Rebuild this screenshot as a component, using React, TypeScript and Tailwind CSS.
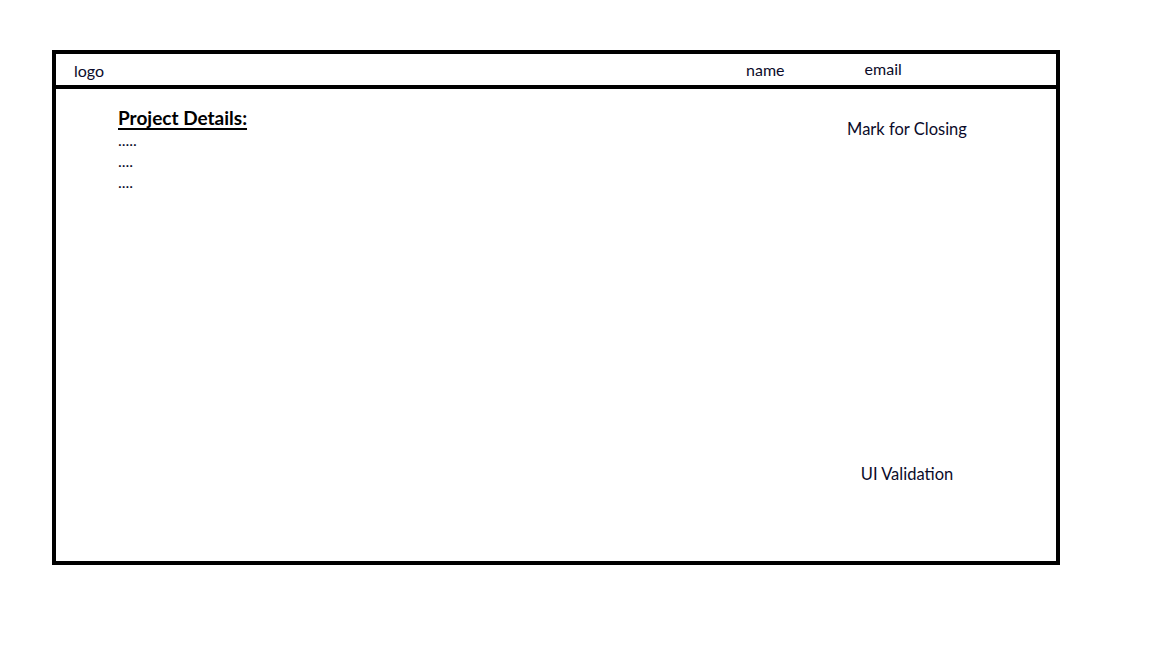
const App = () => {
    return (
        <div className="w-[1152px] h-[648px] bg-white pt-[50px] pl-[52px] text-[#0b0b2a]" style={{ fontFamily: 'Lato, "Open Sans", sans-serif' }}>
            <div className="w-[1008px] h-[515px] border-4 border-black flex flex-col">
                {/* Header */}
                <div className="h-[35px] border-b-4 border-black flex items-center text-[16px]">
                    <span className="ml-[18px] mt-[3px]">logo</span>
                    <span className="ml-[642px] mt-[1px]">name</span>
                    <span className="ml-[80px] -mt-[2px]">email</span>
                </div>

                {/* Body */}
                <div className="flex-1 flex">
                    <div className="flex-1 pl-[62px] pt-[17px]">
                        <h2 className="font-bold text-[19px] leading-[23px] underline decoration-2 underline-offset-[3px] text-black">
                            Project Details:
                        </h2>
                        <ul className="text-[16px] leading-[21px]">
                            <li>.....</li>
                            <li>....</li>
                            <li>....</li>
                        </ul>
                    </div>
                    <div className="w-[240px] mr-[29px] flex flex-col items-center text-[16.5px] pt-[28px]">
                        <span>Mark for Closing</span>
                        <span className="mt-[320px]">UI Validation</span>
                    </div>
                </div>
            </div>
        </div>
    );
};

export default App;
